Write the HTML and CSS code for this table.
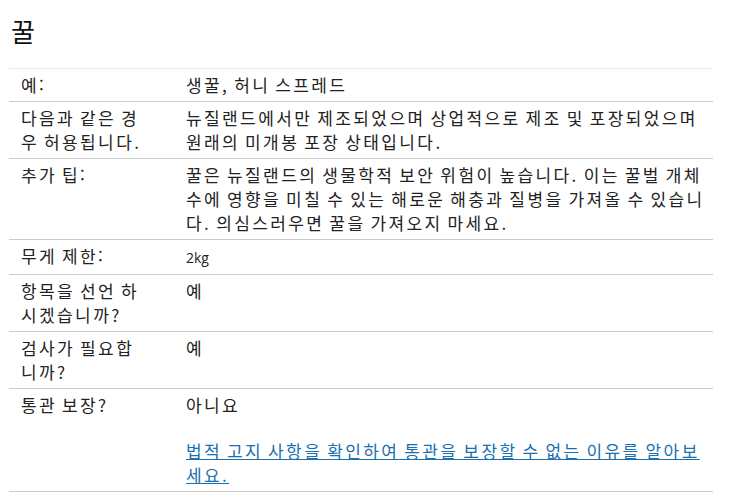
FILE: index.html
```html
<!DOCTYPE html>
<html lang="ko">
<head>
<meta charset="utf-8">
<link rel="stylesheet" href="styles.css">
</head>
<body>
<main class="page">
  <h1 class="title">꿀</h1>
  <div class="table">
    <div class="row">
      <div class="label">예:</div>
      <div class="value">생꿀, 허니 스프레드</div>
    </div>
    <div class="row">
      <div class="label">다음과 같은 경우 허용됩니다.</div>
      <div class="value">뉴질랜드에서만 제조되었으며 상업적으로 제조 및 포장되었으며 원래의 미개봉 포장 상태입니다.</div>
    </div>
    <div class="row">
      <div class="label">추가 팁:</div>
      <div class="value">꿀은 뉴질랜드의 생물학적 보안 위험이 높습니다. 이는 꿀벌 개체수에 영향을 미칠 수 있는 해로운 해충과 질병을 가져올 수 있습니다. 의심스러우면 꿀을 가져오지 마세요.</div>
    </div>
    <div class="row">
      <div class="label">무게 제한:</div>
      <div class="value"><span class="latin">2kg</span></div>
    </div>
    <div class="row">
      <div class="label">항목을 선언 하시겠습니까?</div>
      <div class="value">예</div>
    </div>
    <div class="row">
      <div class="label">검사가 필요합니까?</div>
      <div class="value">예</div>
    </div>
    <div class="row">
      <div class="label">통관 보장?</div>
      <div class="value">
        <p class="answer">아니요</p>
        <p class="note"><a href="#" class="link">법적 고지 사항을 확인하여 통관을 보장할 수 없는 이유를 알아보세요.</a></p>
      </div>
    </div>
  </div>
</main>
</body>
</html>
```

FILE: styles.css
```css
html, body {
  margin: 0;
  padding: 0;
  background: #ffffff;
}
body {
  font-family: "Noto Sans CJK KR", "Open Sans", sans-serif;
  color: #222222;
  font-size: 17px;
  line-height: 24px;
  letter-spacing: 2.4px;
  word-spacing: -2.2px;
}
.page {
  padding: 0 26px 0 9px;
}
.title {
  margin: 0;
  padding: 14px 0 0 2px;
  height: 68px;
  box-sizing: border-box;
  font-size: 26px;
  line-height: 34px;
  font-weight: 400;
  letter-spacing: 0;
  word-spacing: 0;
  color: #111111;
}
.table {
  display: flex;
  flex-direction: column;
  border-top: 1px solid #e3e8eb;
}
.row {
  display: grid;
  grid-template-columns: 168px 1fr;
  border-bottom: 1px solid #cccccc;
  padding: 4px 0;
}
.label {
  padding: 0 34px 0 12px;
}
.value {
  padding: 0 8px 0 9px;
}
.latin {
  font-family: "Open Sans", sans-serif;
  font-size: 14px;
  letter-spacing: 0;
  word-spacing: 0;
}
.answer {
  margin: 0 0 22px 0;
}
.note {
  margin: 0;
}
.link {
  color: #1a6fb0;
  text-decoration: underline;
}
```
